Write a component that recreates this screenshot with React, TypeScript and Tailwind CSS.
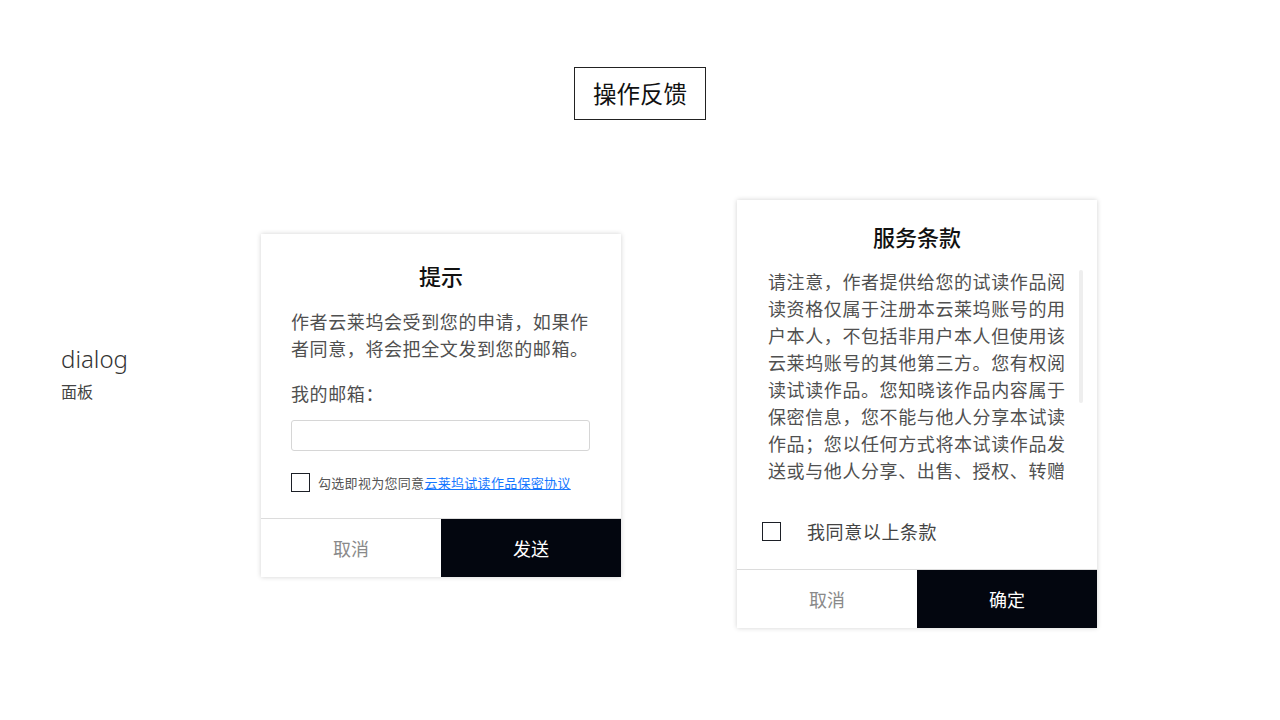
import React from "react";

const FONT = {
  fontFamily: '"Noto Sans CJK SC", "Noto Sans", sans-serif',
};

function Checkbox() {
  return <span className="block h-[19px] w-[19px] shrink-0 border border-[#1c1f26] bg-white" />;
}

function Footer({ ok }: { ok: string }) {
  return (
    <div className="flex h-[59px] border-t border-[#dcdcdc]">
      <button className="flex-1 text-[18px] text-[#8a8a8a]">取消</button>
      <button className="w-[180px] bg-[#03060f] text-[18px] text-white">{ok}</button>
    </div>
  );
}

function NoticeDialog() {
  return (
    <div className="mt-[34px] flex w-[360px] flex-col bg-white shadow-[0_0_5px_rgba(0,0,0,0.18)]">
      <div className="px-[30px] pt-[26px]">
        <h2 className="text-center text-[22px] font-medium leading-[30px] text-[#111]">提示</h2>
        <p className="mt-[18px] text-[18px] leading-[27px] tracking-[0.6px] text-[#505050]">
          作者云莱坞会受到您的申请，如果作者同意，将会把全文发到您的邮箱。
        </p>
        <div className="mt-[18px] text-[18px] leading-[27px] tracking-[0.6px] text-[#505050]">我的邮箱：</div>
        <input
          className="mt-[13px] block h-[31px] w-[299px] rounded-[3px] border border-[#d6d6d6] outline-none"
          type="text"
        />
        <label className="mt-[22px] flex items-center gap-[8px]">
          <Checkbox />
          <span className="text-[13px] leading-[19px] tracking-[0.3px] text-[#555]">
            勾选即视为您同意
            <a className="text-[#1677ff] underline" href="#">
              云莱坞试读作品保密协议
            </a>
          </span>
        </label>
      </div>
      <div className="mt-[26px]">
        <Footer ok="发送" />
      </div>
    </div>
  );
}

const TERMS =
  "请注意，作者提供给您的试读作品阅读资格仅属于注册本云莱坞账号的用户本人，不包括非用户本人但使用该云莱坞账号的其他第三方。您有权阅读试读作品。您知晓该作品内容属于保密信息，您不能与他人分享本试读作品；您以任何方式将本试读作品发送或与他人分享、出售、授权、转赠";

function TermsDialog() {
  return (
    <div className="flex w-[360px] flex-col bg-white shadow-[0_0_5px_rgba(0,0,0,0.18)]">
      <div className="pt-[21px]">
        <h2 className="text-center text-[22px] font-medium leading-[30px] text-[#111]">服务条款</h2>
        <div className="relative mt-[16.5px] h-[216px] overflow-hidden pl-[31px]">
          <p className="w-[300px] text-[18px] leading-[27px] tracking-[0.6px] text-[#505050]">{TERMS}</p>
          <span className="absolute left-[342px] top-[2px] h-[133px] w-[4px] rounded-full bg-[#eeeeee]" />
        </div>
        <label className="mt-[34.5px] flex items-center gap-[26px] pl-[25px]">
          <Checkbox />
          <span className="text-[18px] leading-[27px] tracking-[0.6px] text-[#444]">我同意以上条款</span>
        </label>
      </div>
      <div className="mt-[24px]">
        <Footer ok="确定" />
      </div>
    </div>
  );
}

export default function App() {
  return (
    <div className="min-h-[720px] w-[1280px] bg-white" style={FONT}>
      <div className="flex justify-center pt-[67px]">
        <div className="flex h-[53px] items-center border border-[#222] px-[18px] text-[23.5px] text-[#111]">
          操作反馈
        </div>
      </div>
      <div className="mt-[80px] flex items-start pl-[61px]">
        <div className="mt-[144px] w-[200px]">
          <div className="text-[24px] font-light leading-[30px] text-[#333]" style={{ fontFamily: '"Noto Sans", sans-serif' }}>
            dialog
          </div>
          <div className="mt-[6px] text-[16px] leading-[22px] text-[#444]">面板</div>
        </div>
        <NoticeDialog />
        <div className="w-[116px]" />
        <TermsDialog />
      </div>
    </div>
  );
}
